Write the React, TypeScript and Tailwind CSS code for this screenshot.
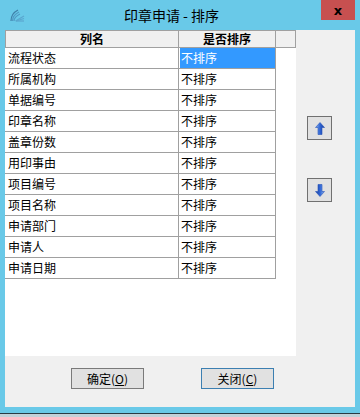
import React from 'react';

const rows = [
  '流程状态',
  '所属机构',
  '单据编号',
  '印章名称',
  '盖章份数',
  '用印事由',
  '项目编号',
  '项目名称',
  '申请部门',
  '申请人',
  '申请日期',
];

function Arrow({ down }: { down?: boolean }) {
  return (
    <svg width="10" height="13" viewBox="0 0 10 13" className={down ? 'rotate-180' : ''}>
      <defs>
        <linearGradient id={down ? 'ad' : 'au'} x1="0" x2="1" y1="0" y2="0">
          <stop offset="0" stopColor="#8fb5ef" />
          <stop offset="0.5" stopColor="#2e64d4" />
          <stop offset="1" stopColor="#1b3f9a" />
        </linearGradient>
      </defs>
      <path d="M5 0.5 L9.5 5.5 L7 5.5 L7 12.5 L3 12.5 L3 5.5 L0.5 5.5 Z" fill={`url(#${down ? 'ad' : 'au'})`} stroke="#2553b8" strokeWidth="0.6" />
    </svg>
  );
}

export default function App() {
  const font = { fontFamily: '"Noto Sans CJK SC", "Noto Sans", sans-serif' };
  return (
    <div className="w-[360px] h-[417px] bg-[#69c9e8] flex flex-col text-black overflow-hidden" style={font}>
      {/* title bar */}
      <div className="h-[30px] flex items-start relative shrink-0">
        <div className="w-[30px] h-[30px] flex items-center justify-center pt-[1px] pl-[4px]">
          <svg width="16" height="14" viewBox="0 0 16 14">
            <path d="M2 12 C 2 7, 5 3, 9 1" stroke="#3f7fa8" strokeWidth="1.2" fill="none" />
            <path d="M3.5 12 C 3.5 8, 6 5, 10 3" stroke="#4f9ac4" strokeWidth="1.2" fill="none" />
            <path d="M5 12 C 5 9, 7 7, 11 5" stroke="#4f9ac4" strokeWidth="1.2" fill="none" />
            <path d="M6.5 12 L 15 7" stroke="#5aa7cf" strokeWidth="1.2" />
            <path d="M7 12 L 15 9.5" stroke="#5aa7cf" strokeWidth="1.2" />
            <path d="M7 12 L 15 12" stroke="#5aa7cf" strokeWidth="1.2" />
          </svg>
        </div>
        <div className="flex-1 text-center text-[14px] leading-[30px] pr-[8px]">印章申请 - 排序</div>
        <div className="w-[34px] h-[20px] bg-[#c75050] mr-[5px] flex items-center justify-center text-[13px] font-bold leading-none" style={{ fontFamily: '"DejaVu Sans", sans-serif' }}>
          x
        </div>
      </div>

      {/* client area */}
      <div className="mx-[5px] h-[377px] bg-[#f0f0f0] flex flex-col shrink-0">
        <div className="flex h-[326px]">
          <div className="w-[291px] bg-white flex flex-col">
            <div className="flex h-[18px] bg-[#f0f0f0] text-[12px] font-bold leading-[16px]">
              <div className="w-[174px] border border-[#a0a0a0] text-center">列名</div>
              <div className="w-[97px] border border-l-0 border-[#a0a0a0] text-center">是否排序</div>
              <div className="w-[20px] border border-l-0 border-[#a0a0a0]"></div>
            </div>
            {rows.map((r, i) => (
              <div key={r} className="flex h-[21px] text-[12px] leading-[20px]">
                <div className="w-[174px] border-b border-r border-[#a0a0a0] pl-[3px]">{r}</div>
                <div className="w-[97px] border-b border-r border-[#a0a0a0] pl-[1px]">
                  <div className={i === 0 ? 'bg-[#3399ff] text-white h-[20px] pl-[1px]' : 'pl-[1px]'}>不排序</div>
                </div>
              </div>
            ))}
          </div>
          <div className="flex-1 flex flex-col items-start pt-[86px] pl-[11px]">
            <div className="w-[25px] h-[24px] bg-[#e1e1e1] border border-[#707070] flex items-center justify-center">
              <Arrow />
            </div>
            <div className="w-[25px] h-[24px] mt-[38px] bg-[#e1e1e1] border border-[#707070] flex items-center justify-center">
              <Arrow down />
            </div>
          </div>
        </div>
        <div className="flex pt-[12px] text-[12px]">
          <div className="ml-[66px] w-[73px] h-[21px] bg-[#e1e1e1] border border-[#7a7a7a] flex items-center justify-center leading-none">
            确定(<span className="underline">O</span>)
          </div>
          <div className="ml-[57px] w-[73px] h-[21px] bg-[#e1e1e1] border border-[#3c7fb1] flex items-center justify-center leading-none">
            关闭(<span className="underline">C</span>)
          </div>
        </div>
      </div>
      <div className="h-[6px] shrink-0"></div>
      <div className="h-[1px] bg-[#2b3a44] shrink-0"></div>
      <div className="flex-1 bg-[#c3d1d9]"></div>
    </div>
  );
}
